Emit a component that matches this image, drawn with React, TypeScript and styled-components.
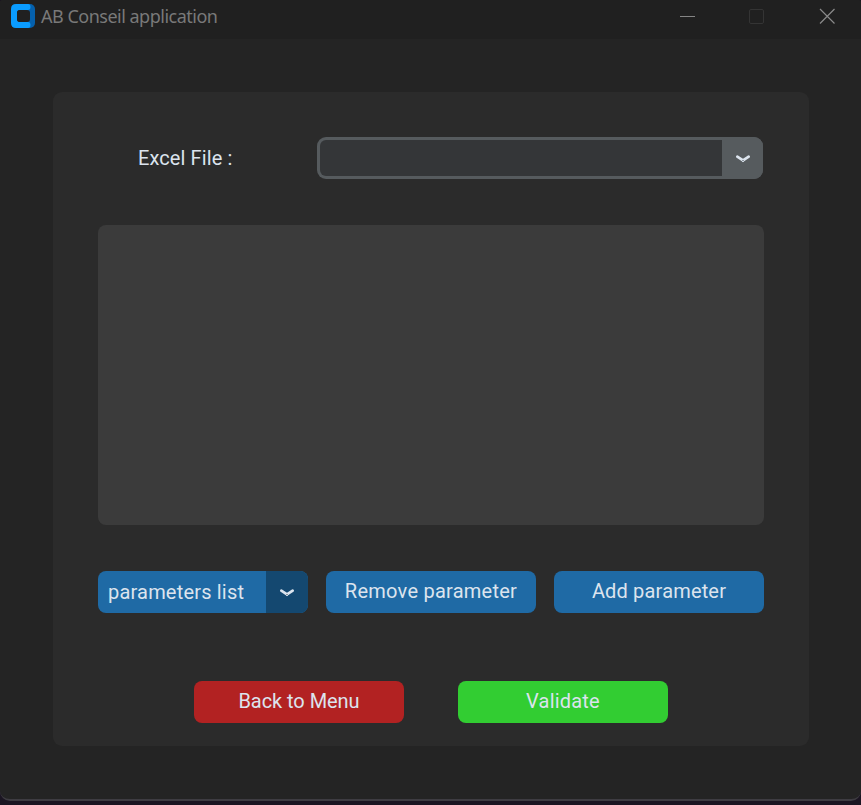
import React from 'react';
import styled, { createGlobalStyle } from 'styled-components';

const GlobalStyle = createGlobalStyle`
  * { box-sizing: border-box; }
  html, body { margin: 0; background: #1b1522; overflow: hidden; }
  button { border: 0; padding: 0; margin: 0; font: inherit; color: inherit; }
`;

const Desktop = styled.div`
  width: 861px;
  height: 805px;
  background: #1b1522;
  color: #dce4ee;
  font: 400 20px/24px Roboto, sans-serif;
`;

const Window = styled.main`
  height: 801px;
  display: flex;
  flex-direction: column;
  overflow: hidden;
  background: #242424;
  border-bottom: 2px solid #3e3c42;
  border-radius: 3px 3px 10px 10px;
`;

const TitleBar = styled.header`
  flex: none;
  height: 39px;
  display: flex;
  justify-content: space-between;
  background: #202020;
`;

const Brand = styled.div`
  display: flex;
  gap: 6px;
  padding: 4px 0 0 11px;
`;

const Title = styled.span`
  color: #797979;
  font: 400 18px/25px "Noto Sans", sans-serif;
  letter-spacing: -0.5px;
`;

const Controls = styled.div`
  display: flex;
  gap: 54px;
  padding: 8px 26px 0 0;
`;

const Control = styled.button`
  width: 16px;
  height: 16px;
  background: transparent;
  svg { display: block; }
`;

const Panel = styled.section`
  width: 756px;
  height: 654px;
  margin: 53px 0 0 53px;
  padding: 45px 45px 0;
  background: #2b2b2b;
  border-radius: 9px;
`;

const FileRow = styled.div`
  display: flex;
  justify-content: space-between;
  padding: 0 1px 0 40px;
`;

const Label = styled.label`
  line-height: 42px;
  letter-spacing: 0.1px;
`;

const Combo = styled.div`
  display: flex;
  width: 446px;
  height: 42px;
  overflow: hidden;
  background: #565b5e;
  border-radius: 9px;
`;

const Field = styled.div`
  width: 402px;
  height: 36px;
  margin: 3px 0 0 3px;
  background: #343638;
  border-radius: 6px 0 0 6px;
`;

const Arrow = styled.button<{ $shade: string; $width: number }>`
  width: ${p => p.$width}px;
  height: 42px;
  padding-top: 2px;
  display: flex;
  align-items: center;
  justify-content: center;
  background: ${p => p.$shade};
`;

const ListBox = styled.div`
  height: 300px;
  margin-top: 46px;
  background: #3b3b3b;
  border-radius: 8px;
`;

const ButtonRow = styled.div<{ $gap: number; $top: number }>`
  display: flex;
  justify-content: center;
  gap: ${p => p.$gap}px;
  margin-top: ${p => p.$top}px;
`;

const Button = styled.button<{ $color: string; $spacing?: number }>`
  width: 210px;
  height: 42px;
  padding-bottom: 2px;
  background: ${p => p.$color};
  border-radius: 8px;
  letter-spacing: ${p => p.$spacing ?? 0}px;
`;

const OptionMenu = styled.div`
  display: flex;
  width: 210px;
  height: 42px;
  overflow: hidden;
  background: #1f6aa5;
  border-radius: 8px;
`;

const OptionText = styled.span`
  width: 168px;
  padding-left: 10px;
  line-height: 42px;
  letter-spacing: 0.19px;
  white-space: nowrap;
`;

const Chevron = () => (
  <svg width="16" height="10" viewBox="0 0 16 10" fill="none">
    <path d="M2.3 2.7 8 6.4 13.7 2.7" stroke="#dce4ee" strokeWidth="2.7" strokeLinecap="round" />
    <path d="M6.2 6.2H9.8L8 8.3Z" fill="#dce4ee" />
    <path d="M7 6.5H9" stroke="#8d969f" strokeWidth="1" />
  </svg>
);

const Logo = () => (
  <svg width="24" height="24" viewBox="0 0 24 24">
    <rect x="10" width="14" height="24" rx="5" fill="#0560ac" />
    <path d="M5 0H17Q19.5 0 19.5 3T17 6H9Q6 6 6 9V15Q6 18 9 18H17Q19.5 18 19.5 21T17 24H5Q0 24 0 19V5Q0 0 5 0Z" fill="#0a9cff" />
    <rect x="6" y="6" width="13" height="12" rx="3" fill="#202020" />
  </svg>
);

export default function App() {
  return (
    <Desktop>
      <GlobalStyle />
      <Window>
        <TitleBar>
          <Brand><Logo /><Title>AB Conseil application</Title></Brand>
          <Controls>
            <Control aria-label="Minimize">
              <svg width="16" height="16"><path d="M1 8.5H16" stroke="#858585" /></svg>
            </Control>
            <Control aria-label="Maximize">
              <svg width="16" height="16"><rect x="0.5" y="1.5" width="14" height="14" rx="1.5" fill="none" stroke="#343434" /></svg>
            </Control>
            <Control aria-label="Close">
              <svg width="16" height="16"><path d="M1 1 15.5 15.5M15.5 1 1 15.5" stroke="#8a8a8a" strokeWidth="1.2" /></svg>
            </Control>
          </Controls>
        </TitleBar>
        <Panel>
          <FileRow>
            <Label>Excel File :</Label>
            <Combo>
              <Field />
              <Arrow $shade="#565b5e" $width={41} aria-label="Choose file"><Chevron /></Arrow>
            </Combo>
          </FileRow>
          <ListBox />
          <ButtonRow $gap={18} $top={46}>
            <OptionMenu>
              <OptionText>parameters list</OptionText>
              <Arrow $shade="#144870" $width={42} aria-label="Choose parameter"><Chevron /></Arrow>
            </OptionMenu>
            <Button $color="#1f6aa5" $spacing={0.25}>Remove parameter</Button>
            <Button $color="#1f6aa5" $spacing={0.17}>Add parameter</Button>
          </ButtonRow>
          <ButtonRow $gap={54} $top={68}>
            <Button $color="#b22222" $spacing={-0.05}>Back to Menu</Button>
            <Button $color="#32cd32" $spacing={0.2}>Validate</Button>
          </ButtonRow>
        </Panel>
      </Window>
    </Desktop>
  );
}
